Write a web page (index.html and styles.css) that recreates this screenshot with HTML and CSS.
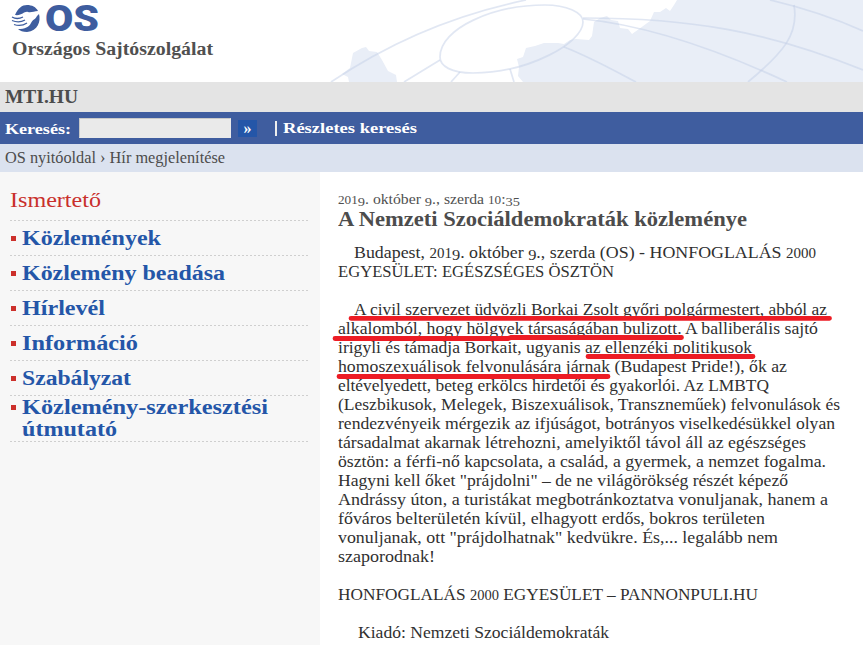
FILE: index.html
```html
<!DOCTYPE html>
<html lang="hu">
<head>
<meta charset="utf-8">
<title>Országos Sajtószolgálat</title>
<link rel="stylesheet" href="styles.css">
</head>
<body>
<header class="banner">
  <svg class="globe" width="863" height="82" viewBox="0 0 863 82" fill="none" aria-hidden="true">
    <g fill="#e9eef7">
      <path d="M349 82L348 77L342 74L350 68L353 53L362 48L366 47L369 51L377 52L382 60L388 71L396 75L397 82Z"/>
      <path d="M523 82L518 76L519 67L517 59L523 57L526 48L535 46L544 43L558 43L564 44L570 40L576 39L589 40L592 36L594 22L600 18L607 16L611 20L618 21L620 28L628 29L632 34L639 29L650 21L654 12L660 12L666 8L670 11L674 5L677 0H863V82Z"/>
    </g>
    <g stroke="#c3d0e8" stroke-opacity=".5" stroke-width="1.700">
      <path d="M331 82C390 42 453 15 526 0"/>
      <path d="M404 82L440 60M451 82L460 72M510 69L514 82"/>
      <path d="M440 57C440 28 494 5 545 5C566 5 583 12 583 22C583 43 528 73 473 73C451 73 440 66 440 57Z"/>
      <path d="M583 18C690 18 767 31 863 70"/>
      <path d="M583 19C645 25 716 49 787 82"/>
      <path d="M564 47C590 57 615 71 636 82M770 0Q821 12 863 31"/>
      <path d="M794 5C799 34 784 52 748 82"/>
    </g>
  </svg>
  <svg class="logo" width="220" height="64" viewBox="0 0 220 64" aria-label="OS">
    <g fill="#3e5d9f">
      <path d="M15 15C18 8 22 5 27 5C32 5 36 7 38 11C34 11 31 13 28 12C24 11 22 16 15 15Z"/>
      <path d="M39 14C41 21 38 31 27 32C23 32 20 31 18 29C25 29 29 27 31 23C33 19 35 20 37 16Z"/>
    </g>
    <path d="M12 17Q17 20 23 17M12 20.500Q19 23.500 25 20M14 24.500Q21 27 27 23" fill="none" stroke="#3e5d9f" stroke-width="1.300"/>
    <text class="logo-os" x="45" y="31" textLength="54" lengthAdjust="spacingAndGlyphs">OS</text>
    <text class="logo-name" x="12" y="55" textLength="201" lengthAdjust="spacingAndGlyphs">Országos Sajtószolgálat</text>
  </svg>
</header>
<div class="site"><b data-w="73">MTI.HU</b></div>
<form class="search">
  <label for="q"><span data-w="66">Keresés:</span></label>
  <input id="q" type="text">
  <button type="button">»</button>
  <i class="bar"></i>
  <a data-w="134">Részletes keresés</a>
</form>
<nav class="crumbs"><span data-w="220">OS nyitóoldal › Hír megjelenítése</span></nav>
<div class="columns">
  <aside>
    <h2><span data-w="91">Ismertető</span></h2>
    <ul>
      <li><span data-w="139">Közlemények</span></li>
      <li><span data-w="203">Közlemény beadása</span></li>
      <li><span data-w="83">Hírlevél</span></li>
      <li><span data-w="116">Információ</span></li>
      <li><span data-w="109">Szabályzat</span></li>
      <li class="two"><span data-w="246">Közlemény-szerkesztési</span><br><span data-w="95">útmutató</span></li>
    </ul>
  </aside>
  <main>
    <div class="date"><span data-w="182"><s>201</s><u>9</u>. október <u>9</u>., szerda <s>10</s>:<u>35</u></span></div>
    <h1><span data-w="409">A Nemzeti Szociáldemokraták közleménye</span></h1>
    <p>
      <span class="in" data-w="462">Budapest, <s>201</s><u>9</u>. október <u>9</u>., szerda (OS) - HONFOGLALÁS <s>2000</s></span><br>
      <span data-w="276">EGYESÜLET: EGÉSZSÉGES ÖSZTÖN</span>
    </p>
    <p>
      <span class="in" data-w="473">A civil szervezet üdvözli Borkai Zsolt győri polgármestert, abból az</span><br>
      <span data-w="480">alkalomból, hogy hölgyek társaságában bulizott. A balliberális sajtó</span><br>
      <span data-w="414">irigyli és támadja Borkait, ugyanis az ellenzéki politikusok</span><br>
      <span data-w="449">homoszexuálisok felvonulására járnak (Budapest Pride!), ők az</span><br>
      <span data-w="431">eltévelyedett, beteg erkölcs hirdetői és gyakorlói. Az LMBTQ</span><br>
      <span data-w="502">(Leszbikusok, Melegek, Biszexuálisok, Transzneműek) felvonulások és</span><br>
      <span data-w="497">rendezvényeik mérgezik az ifjúságot, botrányos viselkedésükkel olyan</span><br>
      <span data-w="468">társadalmat akarnak létrehozni, amelyiktől távol áll az egészséges</span><br>
      <span data-w="488">ösztön: a férfi-nő kapcsolata, a család, a gyermek, a nemzet fogalma.</span><br>
      <span data-w="450">Hagyni kell őket "prájdolni" – de ne világörökség részét képező</span><br>
      <span data-w="490">Andrássy úton, a turistákat megbotránkoztatva vonuljanak, hanem a</span><br>
      <span data-w="427">főváros belterületén kívül, elhagyott erdős, bokros területen</span><br>
      <span data-w="440">vonuljanak, ott "prájdolhatnak" kedvükre. És,... legalább nem</span><br>
      <span data-w="97">szaporodnak!</span>
    </p>
    <p><span data-w="420">HONFOGLALÁS <s>2000</s> EGYESÜLET – PANNONPULI.HU</span></p>
    <p><span class="pub" data-w="251">Kiadó: Nemzeti Szociáldemokraták</span></p>
    <svg class="marks" width="543" height="473" viewBox="320 172 543 473" fill="none" stroke="#ed1c24" stroke-width="4.800" stroke-linecap="round" aria-hidden="true">
      <path d="M351 318.300H829.500M335 338.500H508L511 337.500H681.500M588 356.500H753M339 376.500H608"/>
    </svg>
  </main>
</div>
<script src="fit.js"></script>
</body>
</html>
```
FILE: styles.css
```css
* { box-sizing: border-box; }
body {
  margin: 0;
  height: 645px;
  overflow: hidden;
  display: flex;
  flex-direction: column;
  background: #fff;
  color: #303030;
  font-family: "Liberation Serif", serif;
}
[data-w] { display: inline-block; white-space: nowrap; transform-origin: 0 50%; }
.banner { position: relative; height: 82px; flex: none; }
.globe, .logo { position: absolute; left: 0; top: 0; }
.logo { overflow: visible; }
.logo-os { font: 900 36px Roboto, sans-serif; fill: #3e5d9f; }
.logo-name { font: 700 18.500px "Liberation Serif", serif; fill: #505050; }
.site {
  height: 30px;
  flex: none;
  padding-left: 5px;
  background: #e4e4e4;
  color: #4c4c4c;
  font-size: 19.500px;
  line-height: 29px;
}
.search {
  display: flex;
  align-items: center;
  height: 32px;
  flex: none;
  padding-left: 5px;
  background: #3f5d9f;
  color: #fff;
  font-weight: 700;
  font-size: 15.500px;
}
.search label { width: 74px; padding-top: 2px; }
.search input {
  width: 152px;
  height: 20px;
  border: 1px solid #eaeaea;
  border-top-color: #c8c8c8;
  border-left-color: #c8c8c8;
  background: #eaeaea;
}
.search button {
  width: 19px;
  height: 17px;
  margin: 1px 0 0 7px;
  padding: 0;
  border: 0;
  background: #2456a8;
  color: #fff;
  font: 700 16px/14px "Liberation Serif", serif;
}
.bar { width: 2px; height: 15px; margin: 1px 6px 0 18px; background: #eee; }
.crumbs {
  height: 28px;
  flex: none;
  padding-left: 5px;
  background: #dbe2ef;
  color: #4c4c4c;
  font-size: 16px;
  line-height: 28px;
}
.columns { display: flex; flex: 1; min-height: 0; }
aside { width: 320px; flex: none; padding: 0 12px 0 10px; background: #f7f7f7; }
aside h2 {
  height: 48px;
  margin: 0;
  color: #c9302c;
  font-weight: 400;
  font-size: 22px;
  line-height: 56px;
}
aside ul { margin: 0; padding: 0; list-style: none; }
aside li {
  position: relative;
  height: 35px;
  padding-left: 12px;
  background: repeating-linear-gradient(90deg, #cfcfcf 0 2px, transparent 2px 4px) 0 0 / 100% 1px no-repeat;
  color: #2456a8;
  font-weight: 700;
  font-size: 20.500px;
  line-height: 37px;
}
aside li::before {
  content: "";
  position: absolute;
  left: 1px;
  top: 16px;
  width: 5px;
  height: 5px;
  background: #cc302b;
}
aside li.two {
  height: 47px;
  padding-top: 1px;
  line-height: 22px;
  background: repeating-linear-gradient(90deg, #cfcfcf 0 2px, transparent 2px 4px) 0 0 / 100% 1px no-repeat,
    repeating-linear-gradient(90deg, #cfcfcf 0 2px, transparent 2px 4px) 0 100% / 100% 1px no-repeat;
}
aside li.two::before { top: 10px; }
main { position: relative; flex: 1; padding: 17px 0 0 18px; }
.date { height: 20px; color: #505050; font-size: 14.500px; line-height: 20px; }
h1 { height: 20px; margin: 0; color: #4c4c4c; font-size: 20px; line-height: 21px; }
main p { margin: 0 0 19px; font-size: 17px; line-height: 19px; }
h1 + p { margin-top: 14px; }
.in { margin-left: 16px; }
.pub { margin-left: 20px; }
/* old-style figures: small ones sit on the baseline, tall ones descend */
s { text-decoration: none; font-size: .84em; line-height: 0; }
u { text-decoration: none; font-size: .92em; line-height: 0; position: relative; top: .12em; }
.marks { position: absolute; left: 0; top: 0; }
```
FILE: fit.js
```js
// Stretch each line out to its set measure.
document.querySelectorAll('[data-w]').forEach(function (el) {
  var range = document.createRange();
  range.selectNodeContents(el);
  var natural = range.getBoundingClientRect().width;
  el.style.transform = 'scaleX(' + (el.dataset.w / natural).toFixed(4) + ')';
});
```
